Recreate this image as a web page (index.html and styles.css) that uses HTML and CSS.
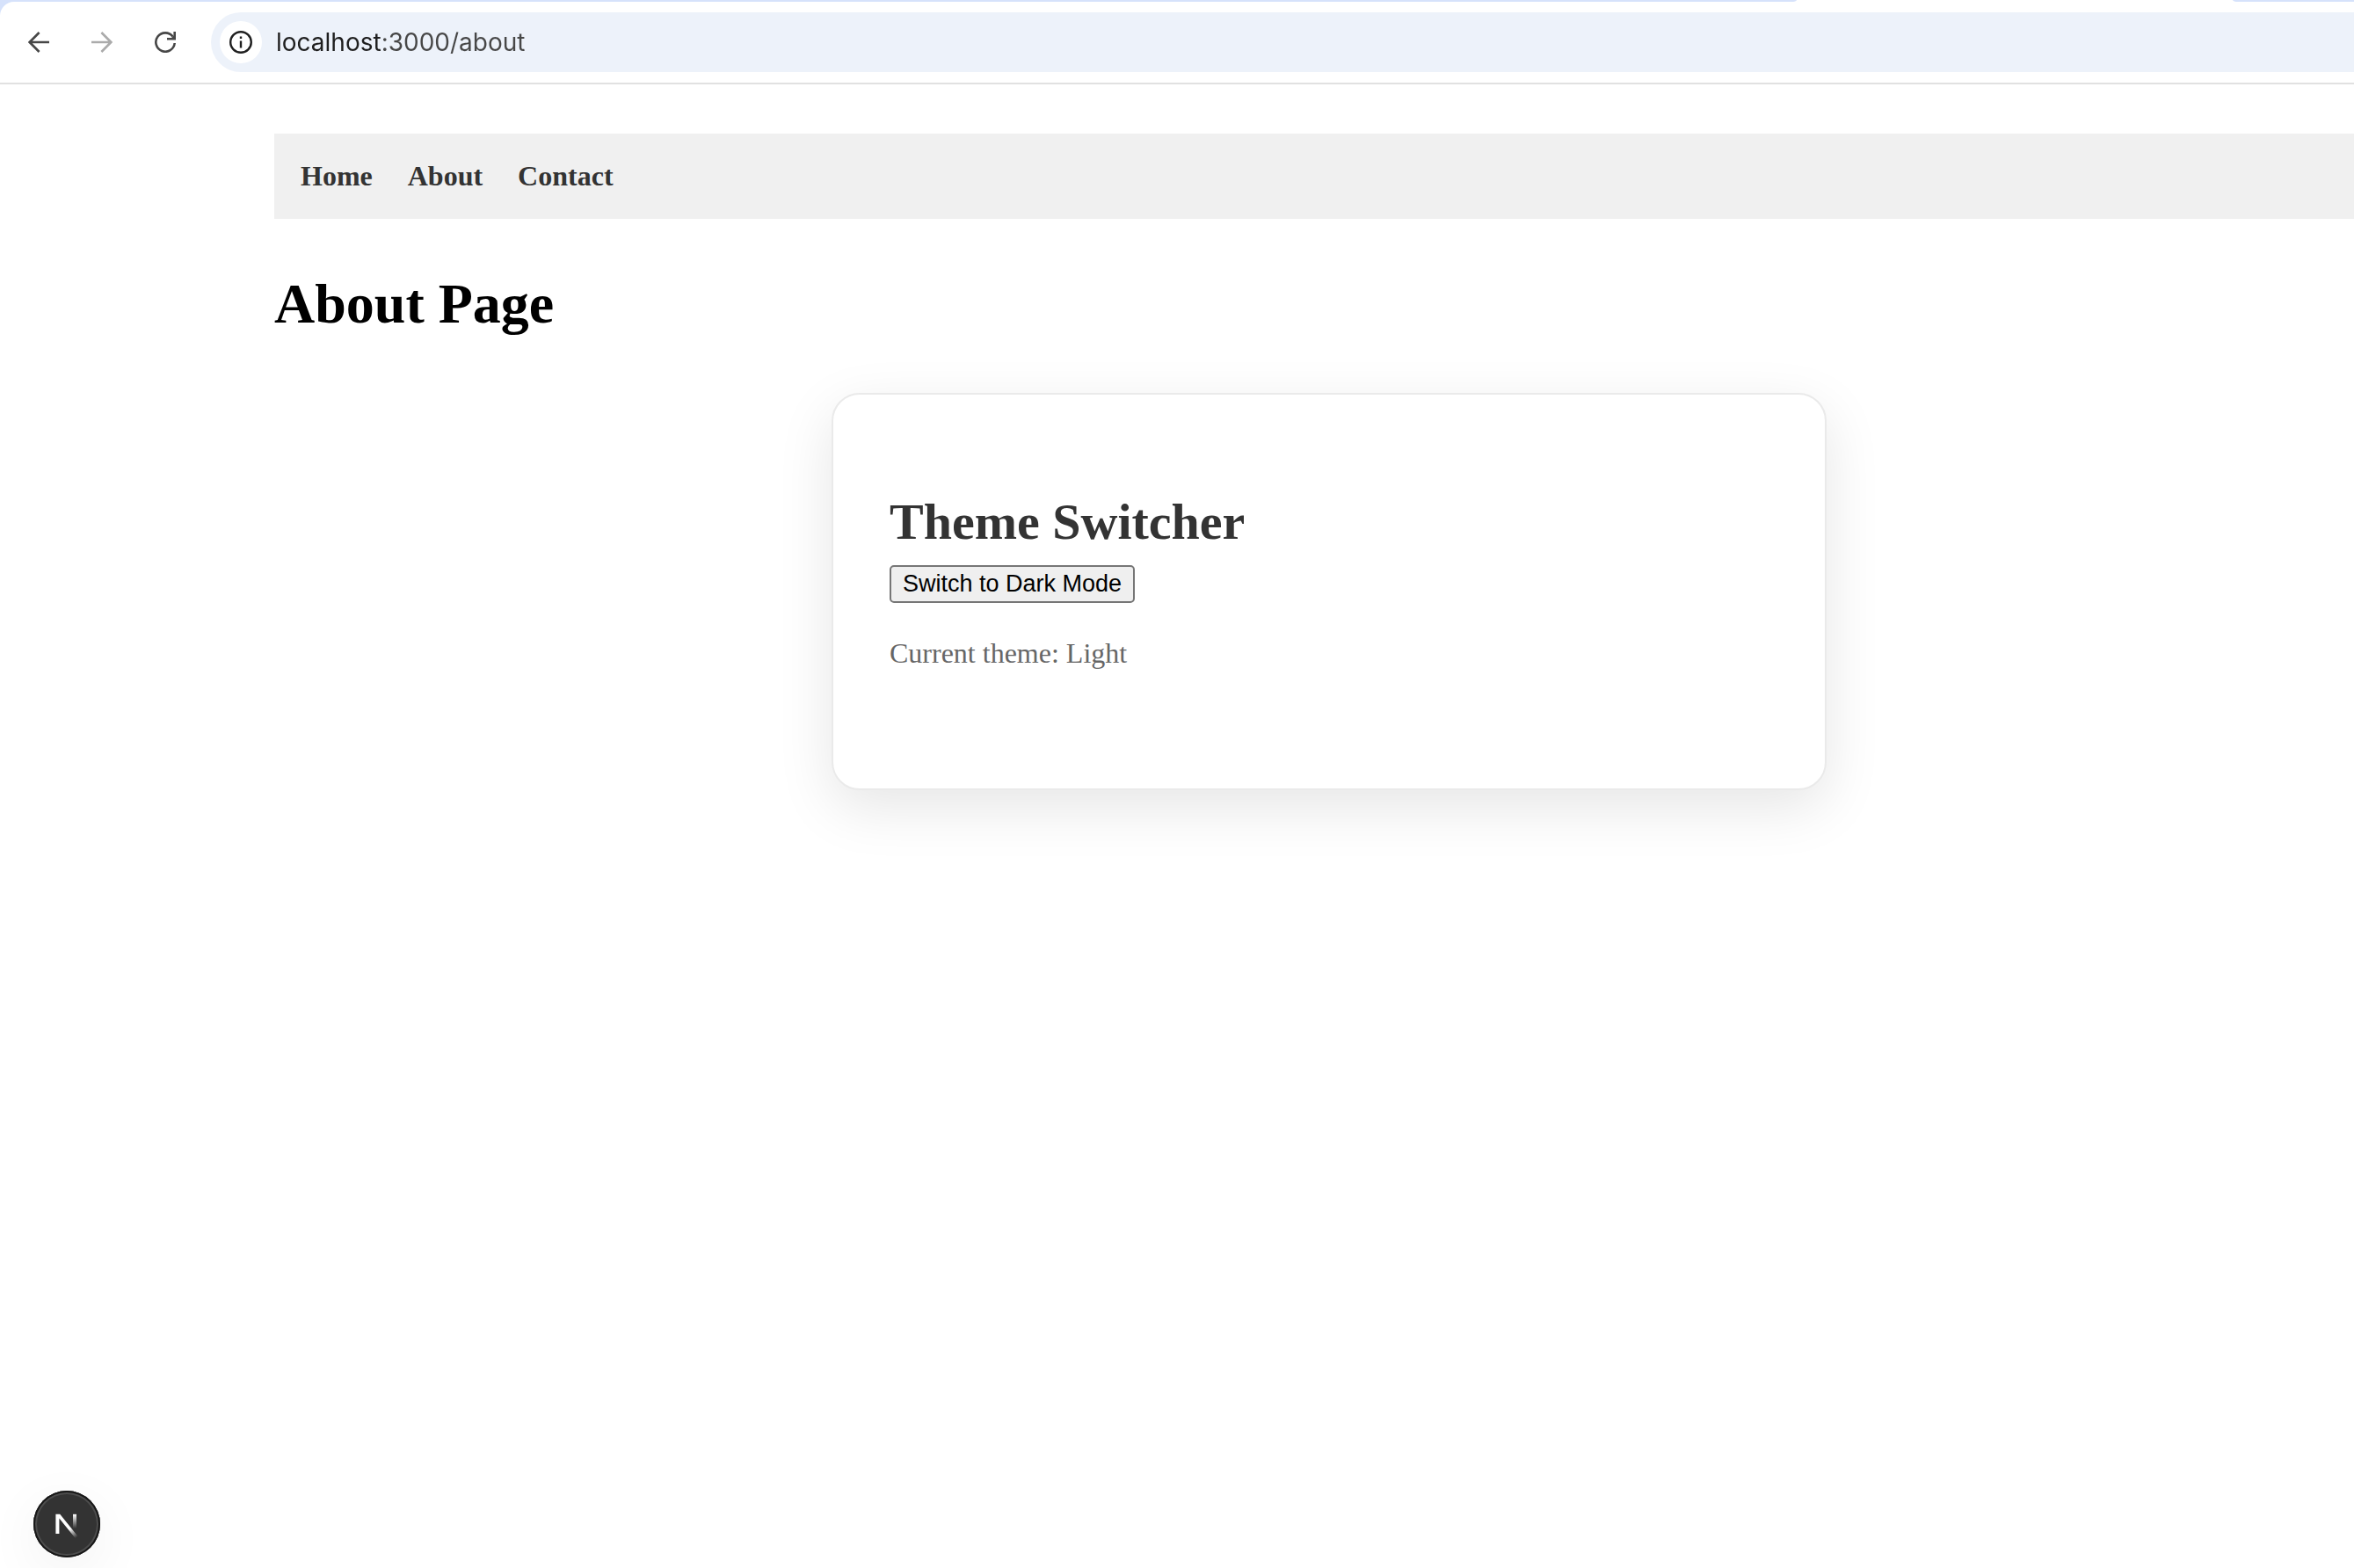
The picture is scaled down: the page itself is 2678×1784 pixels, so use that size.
FILE: index.html
```html
<!DOCTYPE html>
<html lang="en">
<head>
<meta charset="utf-8">
<title>About Page</title>
<link rel="stylesheet" href="styles.css">
</head>
<body>
<header class="browser">
  <div class="tabstrip">
    <div class="strip strip-left"></div>
    <div class="tab"></div>
    <div class="strip strip-right"></div>
  </div>
  <div class="toolbar">
    <button class="tool" type="button" aria-label="Back">
      <svg width="24" height="24" viewBox="0 0 24 24" fill="none" stroke="currentColor" stroke-width="2.6"><path d="M24 12H2M12.6 1 1.7 12l10.9 11"/></svg>
    </button>
    <button class="tool tool-off" type="button" aria-label="Forward" disabled>
      <svg width="24" height="24" viewBox="0 0 24 24" fill="none" stroke="currentColor" stroke-width="2.6"><path d="M0 12h22M11.4 1l10.9 11-10.9 11"/></svg>
    </button>
    <button class="tool" type="button" aria-label="Reload">
      <svg width="24" height="24" viewBox="0 0 24 24" fill="none" stroke="currentColor" stroke-width="2.6"><path d="M22.7 13A10.7 10.7 0 1 1 20.6 5.6"/><path d="M24 0v9.6H14V7h5.2l2.2-2.2V0z" fill="currentColor" stroke="none"/></svg>
    </button>
    <div class="address">
      <button class="site-info" type="button" aria-label="View site information">
        <svg width="26" height="26" viewBox="0 0 26 26" fill="none" stroke="currentColor" stroke-width="2.4"><circle cx="13" cy="13" r="11.8"/><path d="M13 11.4v8M13 6.4v2.6"/></svg>
      </button>
      <input class="url" type="text" aria-label="Address" value="localhost:3000/about">
    </div>
  </div>
</header>
<main class="page">
  <nav class="nav">
    <a href="/">Home</a>
    <a href="/about">About</a>
    <a href="/contact">Contact</a>
  </nav>
  <h1 class="title">About Page</h1>
  <div class="stage">
    <section class="card">
      <h2 class="card-title">Theme Switcher</h2>
      <button class="switch" type="button">Switch to Dark Mode</button>
      <p class="status">Current theme: Light</p>
    </section>
  </div>
</main>
<button class="devtools" type="button" aria-label="Open Next.js Dev Tools">
  <svg width="76" height="76" viewBox="0 0 76 76" fill="none">
    <defs>
      <linearGradient id="diag" gradientUnits="userSpaceOnUse" x1="42" y1="43" x2="49.5" y2="53"><stop stop-color="#fff"/><stop offset="1" stop-color="#fff" stop-opacity="0"/></linearGradient>
      <linearGradient id="stem" gradientUnits="userSpaceOnUse" x1="46" y1="27" x2="46" y2="43"><stop stop-color="#fff"/><stop offset="1" stop-color="#fff" stop-opacity="0"/></linearGradient>
    </defs>
    <path d="M25.4 26.8h4.8L51 52.4 48 54.4 29.4 31.4V49h-4z" fill="url(#diag)"/>
    <path d="M45 26.8h4v16.2h-4z" fill="url(#stem)"/>
  </svg>
</button>
</body>
</html>
```
FILE: styles.css
```css
* { box-sizing: border-box; }

body {
  margin: 0;
  min-height: 100vh;
  background: #fff;
  color: #000;
  font-family: "Liberation Serif", "Times New Roman", serif;
  font-size: 32px;
}

button { font: inherit; padding: 0; }

/* Browser toolbar */
.browser {
  background: linear-gradient(#d6e2fb 20px, #fff 20px);
  border-bottom: 2px solid #e1e1e1;
}
.tabstrip {
  display: flex;
  height: 2px;
  background: #fff;
}
.strip { background: #d6e2fb; }
.strip-left { flex: 1; border-bottom-right-radius: 6px 2px; }
.tab { width: 496px; }
.strip-right { width: 138px; border-bottom-left-radius: 6px 2px; }
.toolbar {
  display: flex;
  align-items: center;
  height: 92px;
  padding-left: 8px;
  background: #fff;
  border-top-left-radius: 16px;
}
.tool {
  display: grid;
  place-items: center;
  width: 72px;
  height: 68px;
  border: 0;
  background: none;
  color: #474747;
}
.tool-off { color: #ababab; }
.address {
  display: flex;
  flex: 1;
  align-items: center;
  gap: 16px;
  height: 68px;
  margin-left: 16px;
  padding-left: 10px;
  border-radius: 34px 0 0 34px;
  background: #edf2fa;
}
.site-info {
  display: grid;
  place-items: center;
  width: 48px;
  height: 48px;
  border: 0;
  border-radius: 50%;
  background: #fff;
  color: #1f1f1f;
}
.url {
  flex: 1;
  height: 48px;
  padding: 0;
  border: 0;
  outline: 0;
  font: 28px Inter, sans-serif;
  /* the host is darker than the port and path */
  background: linear-gradient(90deg, #1f1f1f 120px, #474747 120px);
  -webkit-background-clip: text;
  background-clip: text;
  color: transparent;
}

/* Page */
.page { padding: 56px 0 0 312px; }
.nav {
  display: flex;
  gap: 40px;
  padding: 30px;
  background: #f0f0f0;
}
.nav a {
  color: #333;
  font-weight: bold;
  text-decoration: none;
}
.title {
  margin: 60px 0 64px;
  font-size: 64px;
}
.stage {
  display: flex;
  justify-content: center;
  padding-left: 34px;
}
.card {
  width: 1132px;
  padding: 64px;
  border: 2px solid #eaeaea;
  border-radius: 32px;
  background: #fff;
  box-shadow: 0 20px 64px rgba(0, 0, 0, 0.1);
}
.card-title {
  margin: 47px 0 16px;
  color: #333;
  font-size: 58px;
}
.switch {
  display: block;
  height: 43px;
  padding: 0 13px;
  border: 2px solid #767676;
  border-radius: 5px;
  background: #efefef;
  color: #000;
  font: 27px "Liberation Sans", Arial, sans-serif;
}
.status {
  margin: 39px 0 71px;
  color: #666;
}

/* Floating badge */
.devtools {
  position: fixed;
  left: 38px;
  bottom: 12px;
  width: 76px;
  height: 76px;
  border: 0;
  border-radius: 50%;
  background: #333;
  box-shadow: inset 0 0 0 2px #171717, inset 0 0 0 4px #4c4c4c, 0 16px 64px rgba(0, 0, 0, 0.06);
}
.devtools svg { display: block; }
```
